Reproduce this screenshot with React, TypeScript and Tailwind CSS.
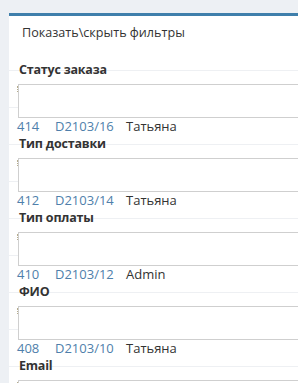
import React from 'react';

interface IOrderRow {
  id: string;
  code: string;
  user: string;
}

interface IFilter {
  label: string;
  row?: IOrderRow;
}

const filters: IFilter[] = [
  { label: 'Статус заказа', row: { id: '414', code: 'D2103/16', user: 'Татьяна' } },
  { label: 'Тип доставки', row: { id: '412', code: 'D2103/14', user: 'Татьяна' } },
  { label: 'Тип оплаты', row: { id: '410', code: 'D2103/12', user: 'Admin' } },
  { label: 'ФИО', row: { id: '408', code: 'D2103/10', user: 'Татьяна' } },
  { label: 'Email' },
];

const FilterBlock: React.FC<IFilter> = ({ label, row }) => {
  return (
    <div>
      <div className="h-[18px] pl-[10px] text-[12.5px] leading-[18px] font-bold tracking-[-0.2px] text-[#333]">
        {label}
      </div>
      <div className="mt-[5px] flex items-start">
        <span className="mt-[2px] ml-[8px] h-[6px] w-[1px] border-l border-dotted border-[#b5ab8c]" />
        <div className="h-[34px] w-[300px] shrink-0 border border-[#cfcfcf] bg-white" />
      </div>
      {row && (
        <div className="flex h-[17px] items-center pl-[8px] text-[13px] leading-[17px]">
          <span className="w-[38px] text-[#4f7fab]">{row.id}</span>
          <span className="w-[71px] text-[#4f7fab]">{row.code}</span>
          <span className="text-[#333]">{row.user}</span>
        </div>
      )}
    </div>
  );
};

const App: React.FC = () => {
  return (
    <div
      className="h-[383px] w-[298px] overflow-hidden bg-[#edf0f4] pt-[13px] pl-[9px]"
      style={{ fontFamily: '"Open Sans", "Noto Sans", sans-serif' }}
    >
      <div className="h-[400px] border-t-[3px] border-[#3f7fab] bg-white">
        <div className="h-[45px] pt-[7px] pl-[13px] text-[12.6px] leading-[20px] text-[#333]">
          Показать\скрыть фильтры
        </div>
        <div className="bg-[repeating-linear-gradient(to_bottom,transparent_0,transparent_9px,#eef0f3_9px,#eef0f3_10px,transparent_10px,transparent_37px)]">
          {filters.map((f) => (
            <FilterBlock key={f.label} {...f} />
          ))}
        </div>
      </div>
    </div>
  );
};

export default App;
